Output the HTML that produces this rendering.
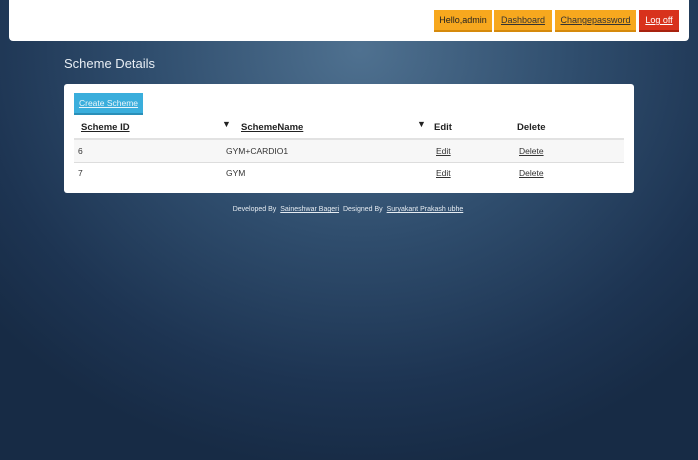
<!DOCTYPE html>
<html><head><style>
*{margin:0;padding:0;box-sizing:border-box}
body{width:698px;height:460px;overflow:hidden;font-family:"Liberation Sans",sans-serif;background:radial-gradient(ellipse 480px 420px at 360px 50px,#4f7190 0%,#2f4d6d 45%,#1d3452 80%,#172b45 100%);position:relative}
.hdr{position:absolute;left:9px;top:0;width:680px;height:41px;background:#fff;border-radius:0 0 4px 4px}
.b{position:absolute;top:10px;height:22px;font-size:9px;line-height:21px;text-align:center;color:#222;background:#f7a81e;border-bottom:2px solid #d68a0c}
.b u{color:#333}
.t{position:absolute;left:64px;top:56px;color:#e8eef4;font-size:13px}
.p{position:absolute;left:64px;top:84px;width:570px;height:109px;background:#fff;border-radius:3px}
.cs{position:absolute;left:10px;top:9px;width:69px;height:22px;background:#3aaedc;color:#eaf6fb;font-size:8.5px;line-height:21px;text-align:center;text-decoration:underline;border-bottom:2px solid #2a8fb8}
.th{position:absolute;top:38px;font-size:9.5px;font-weight:bold;color:#222}
.ar{position:absolute;top:35px;font-size:9px;color:#222}
.line{position:absolute;left:10px;width:550px;height:1px;background:#ddd}
.r{position:absolute;left:10px;width:550px;height:22px}
.c{position:absolute;font-size:8.5px;color:#333;line-height:22px}
.f{position:absolute;top:206px;left:0;width:698px;text-align:center;font-size:7px;color:#e6ecf2}
.f u{margin:0 2px}
</style></head><body>
<div class="hdr"></div>
<div class="b" style="left:434px;width:58px">Hello,admin</div>
<div class="b" style="left:494px;width:58px"><u>Dashboard</u></div>
<div class="b" style="left:555px;width:81px"><u>Changepassword</u></div>
<div class="b" style="left:639px;width:40px;background:#d8321c;border-bottom-color:#a8220f"><u style="color:#fff">Log off</u></div>
<div class="t">Scheme Details</div>
<div class="p">
<div class="cs">Create Scheme</div>
<div class="th" style="left:17px"><u>Scheme ID</u></div>
<div class="ar" style="left:158px">▼</div>
<div class="th" style="left:177px"><u>SchemeName</u></div>
<div class="ar" style="left:353px">▼</div>
<div class="th" style="left:370px">Edit</div>
<div class="th" style="left:453px">Delete</div>
<div class="line" style="top:54px;height:2px;background:#e2e2e2"></div>
<div class="r" style="top:56px;background:#f7f7f7">
<div class="c" style="left:4px">6</div><div class="c" style="left:152px">GYM+CARDIO1</div>
<div class="c" style="left:362px"><u>Edit</u></div><div class="c" style="left:445px"><u>Delete</u></div></div>
<div class="line" style="top:78px"></div>
<div class="r" style="top:78px">
<div class="c" style="left:4px">7</div><div class="c" style="left:152px">GYM</div>
<div class="c" style="left:362px"><u>Edit</u></div><div class="c" style="left:445px"><u>Delete</u></div></div>
</div>
<div class="f">Developed By <u>Saineshwar Bageri</u> Designed By <u>Suryakant Prakash ubhe</u></div>
</body></html>
